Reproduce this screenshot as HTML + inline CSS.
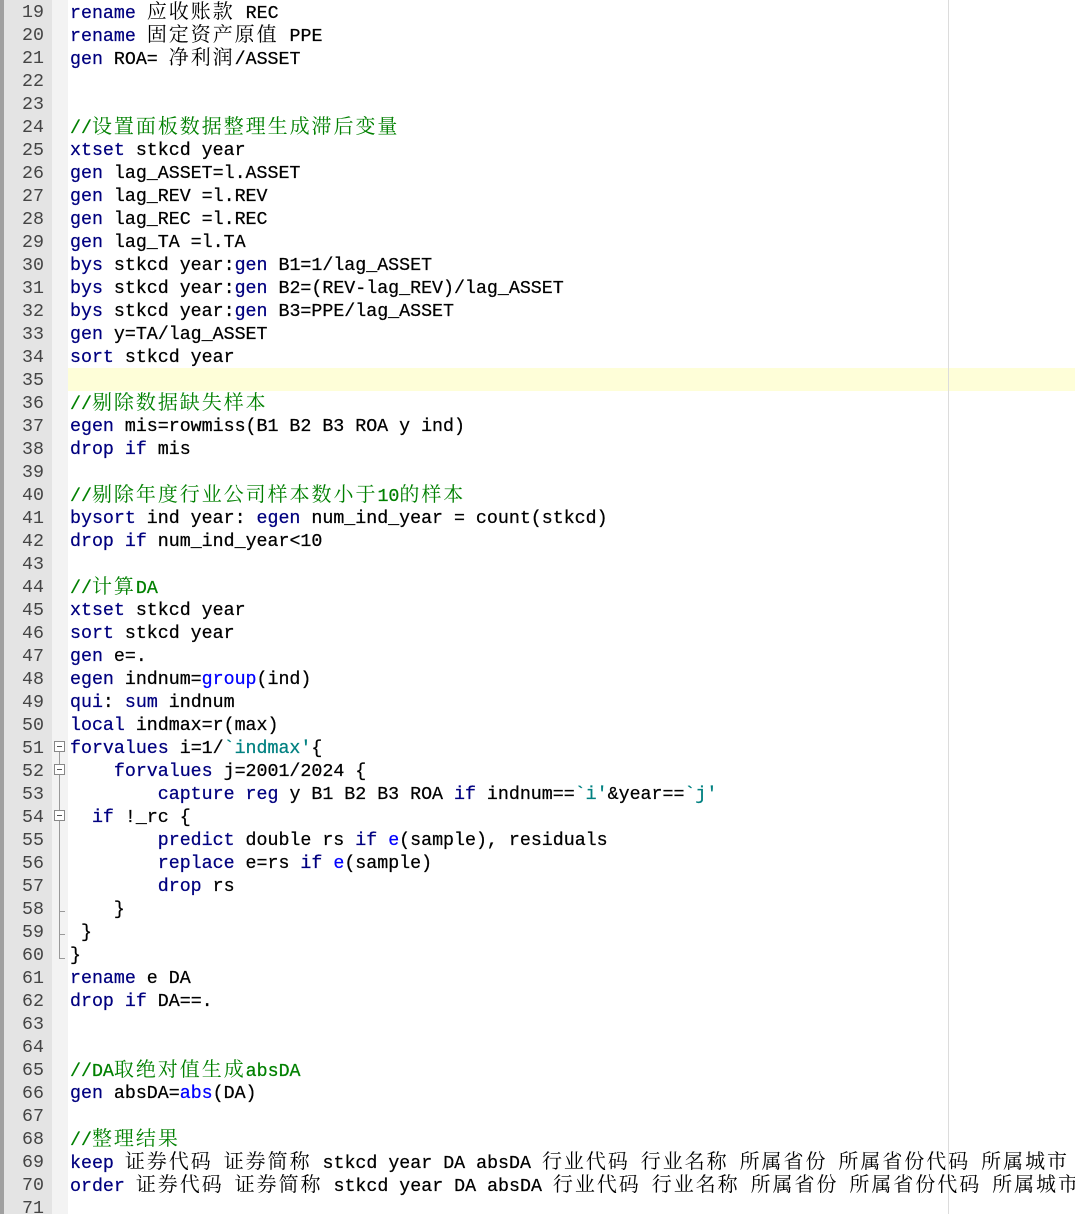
<!DOCTYPE html>
<html><head><meta charset="utf-8"><style>
html,body{margin:0;padding:0;width:1075px;height:1214px;overflow:hidden;background:#fff}
.border{position:absolute;left:0;top:0;width:4px;height:1214px;background:#a0a0a0}
.ln{position:absolute;left:4px;top:0;width:48px;height:1214px;background:#e4e4e4}
.fm{position:absolute;left:52px;top:0;width:16px;height:1214px;background:#f3f3f3}
.edge{position:absolute;left:948px;top:0;width:1px;height:1214px;background:#dcdcdc}
.hl{position:absolute;left:68px;top:368px;width:1007px;height:23px;background:#fefed8}
.n,.l{position:absolute;margin-top:2px;font-family:"Liberation Mono","Noto Serif CJK SC",monospace;font-size:18.3px;line-height:23px;height:23px;white-space:pre}
.n{left:4px;width:40px;text-align:right;color:#444}
.l{left:70px;color:#000;-webkit-text-stroke:0.25px}
.k{color:#00007f}.f{color:#0000ff}.c{color:#008000}.m{color:#008080}
.z{letter-spacing:1.96px;font-size:20px;-webkit-text-stroke:0}
.box{position:absolute;left:54px;width:11px;height:11px;border:1px solid #888;background:#fff;box-sizing:border-box}
.box:after{content:"";position:absolute;left:2px;top:4px;width:5px;height:1px;background:#555}
.vl{position:absolute;left:59px;width:1px;background:#999}
.tk{position:absolute;left:59px;width:6px;height:1px;background:#999}
</style></head><body>
<div class="border"></div><div class="ln"></div><div class="fm"></div><div class="hl"></div><div class="edge"></div>
<div class="vl" style="top:752px;height:207px"></div>
<div class="box" style="top:741px"></div>
<div class="box" style="top:764px"></div>
<div class="box" style="top:810px"></div>
<div class="tk" style="top:911px"></div>
<div class="tk" style="top:934px"></div>
<div class="tk" style="top:958px"></div>

<div class="n" style="top:0px">19</div><div class="l" style="top:0px"><span class="k">rename</span> <span class="z">应收账款</span> REC</div>
<div class="n" style="top:23px">20</div><div class="l" style="top:23px"><span class="k">rename</span> <span class="z">固定资产原值</span> PPE</div>
<div class="n" style="top:46px">21</div><div class="l" style="top:46px"><span class="k">gen</span> ROA= <span class="z">净利润</span>/ASSET</div>
<div class="n" style="top:69px">22</div>
<div class="n" style="top:92px">23</div>
<div class="n" style="top:115px">24</div><div class="l c" style="top:115px">//<span class="z">设置面板数据整理生成滞后变量</span></div>
<div class="n" style="top:138px">25</div><div class="l" style="top:138px"><span class="k">xtset</span> stkcd year</div>
<div class="n" style="top:161px">26</div><div class="l" style="top:161px"><span class="k">gen</span> lag_ASSET=l.ASSET</div>
<div class="n" style="top:184px">27</div><div class="l" style="top:184px"><span class="k">gen</span> lag_REV =l.REV</div>
<div class="n" style="top:207px">28</div><div class="l" style="top:207px"><span class="k">gen</span> lag_REC =l.REC</div>
<div class="n" style="top:230px">29</div><div class="l" style="top:230px"><span class="k">gen</span> lag_TA =l.TA</div>
<div class="n" style="top:253px">30</div><div class="l" style="top:253px"><span class="k">bys</span> stkcd year:<span class="k">gen</span> B1=1/lag_ASSET</div>
<div class="n" style="top:276px">31</div><div class="l" style="top:276px"><span class="k">bys</span> stkcd year:<span class="k">gen</span> B2=(REV-lag_REV)/lag_ASSET</div>
<div class="n" style="top:299px">32</div><div class="l" style="top:299px"><span class="k">bys</span> stkcd year:<span class="k">gen</span> B3=PPE/lag_ASSET</div>
<div class="n" style="top:322px">33</div><div class="l" style="top:322px"><span class="k">gen</span> y=TA/lag_ASSET</div>
<div class="n" style="top:345px">34</div><div class="l" style="top:345px"><span class="k">sort</span> stkcd year</div>
<div class="n" style="top:368px">35</div>
<div class="n" style="top:391px">36</div><div class="l c" style="top:391px">//<span class="z">剔除数据缺失样本</span></div>
<div class="n" style="top:414px">37</div><div class="l" style="top:414px"><span class="k">egen</span> mis=rowmiss(B1 B2 B3 ROA y ind)</div>
<div class="n" style="top:437px">38</div><div class="l" style="top:437px"><span class="k">drop</span> <span class="k">if</span> mis</div>
<div class="n" style="top:460px">39</div>
<div class="n" style="top:483px">40</div><div class="l c" style="top:483px">//<span class="z">剔除年度行业公司样本数小于</span>10<span class="z">的样本</span></div>
<div class="n" style="top:506px">41</div><div class="l" style="top:506px"><span class="k">bysort</span> ind year: <span class="k">egen</span> num_ind_year = count(stkcd)</div>
<div class="n" style="top:529px">42</div><div class="l" style="top:529px"><span class="k">drop</span> <span class="k">if</span> num_ind_year&lt;10</div>
<div class="n" style="top:552px">43</div>
<div class="n" style="top:575px">44</div><div class="l c" style="top:575px">//<span class="z">计算</span>DA</div>
<div class="n" style="top:598px">45</div><div class="l" style="top:598px"><span class="k">xtset</span> stkcd year</div>
<div class="n" style="top:621px">46</div><div class="l" style="top:621px"><span class="k">sort</span> stkcd year</div>
<div class="n" style="top:644px">47</div><div class="l" style="top:644px"><span class="k">gen</span> e=.</div>
<div class="n" style="top:667px">48</div><div class="l" style="top:667px"><span class="k">egen</span> indnum=<span class="f">group</span>(ind)</div>
<div class="n" style="top:690px">49</div><div class="l" style="top:690px"><span class="k">qui</span>: <span class="k">sum</span> indnum</div>
<div class="n" style="top:713px">50</div><div class="l" style="top:713px"><span class="k">local</span> indmax=r(max)</div>
<div class="n" style="top:736px">51</div><div class="l" style="top:736px"><span class="k">forvalues</span> i=1/<span class="m">`indmax'</span>{</div>
<div class="n" style="top:759px">52</div><div class="l" style="top:759px">    <span class="k">forvalues</span> j=2001/2024 {</div>
<div class="n" style="top:782px">53</div><div class="l" style="top:782px">        <span class="k">capture</span> <span class="k">reg</span> y B1 B2 B3 ROA <span class="k">if</span> indnum==<span class="m">`i'</span>&amp;year==<span class="m">`j'</span></div>
<div class="n" style="top:805px">54</div><div class="l" style="top:805px">  <span class="k">if</span> !_rc {</div>
<div class="n" style="top:828px">55</div><div class="l" style="top:828px">        <span class="k">predict</span> double rs <span class="k">if</span> <span class="f">e</span>(sample), residuals</div>
<div class="n" style="top:851px">56</div><div class="l" style="top:851px">        <span class="k">replace</span> e=rs <span class="k">if</span> <span class="f">e</span>(sample)</div>
<div class="n" style="top:874px">57</div><div class="l" style="top:874px">        <span class="k">drop</span> rs</div>
<div class="n" style="top:897px">58</div><div class="l" style="top:897px">    }</div>
<div class="n" style="top:920px">59</div><div class="l" style="top:920px"> }</div>
<div class="n" style="top:943px">60</div><div class="l" style="top:943px">}</div>
<div class="n" style="top:966px">61</div><div class="l" style="top:966px"><span class="k">rename</span> e DA</div>
<div class="n" style="top:989px">62</div><div class="l" style="top:989px"><span class="k">drop</span> <span class="k">if</span> DA==.</div>
<div class="n" style="top:1012px">63</div>
<div class="n" style="top:1035px">64</div>
<div class="n" style="top:1058px">65</div><div class="l c" style="top:1058px">//DA<span class="z">取绝对值生成</span>absDA</div>
<div class="n" style="top:1081px">66</div><div class="l" style="top:1081px"><span class="k">gen</span> absDA=<span class="f">abs</span>(DA)</div>
<div class="n" style="top:1104px">67</div>
<div class="n" style="top:1127px">68</div><div class="l c" style="top:1127px">//<span class="z">整理结果</span></div>
<div class="n" style="top:1150px">69</div><div class="l" style="top:1150px"><span class="k">keep</span> <span class="z">证券代码</span> <span class="z">证券简称</span> stkcd year DA absDA <span class="z">行业代码</span> <span class="z">行业名称</span> <span class="z">所属省份</span> <span class="z">所属省份代码</span> <span class="z">所属城市</span></div>
<div class="n" style="top:1173px">70</div><div class="l" style="top:1173px"><span class="k">order</span> <span class="z">证券代码</span> <span class="z">证券简称</span> stkcd year DA absDA <span class="z">行业代码</span> <span class="z">行业名称</span> <span class="z">所属省份</span> <span class="z">所属省份代码</span> <span class="z">所属城市</span></div>
<div class="n" style="top:1196px">71</div>
</body></html>
